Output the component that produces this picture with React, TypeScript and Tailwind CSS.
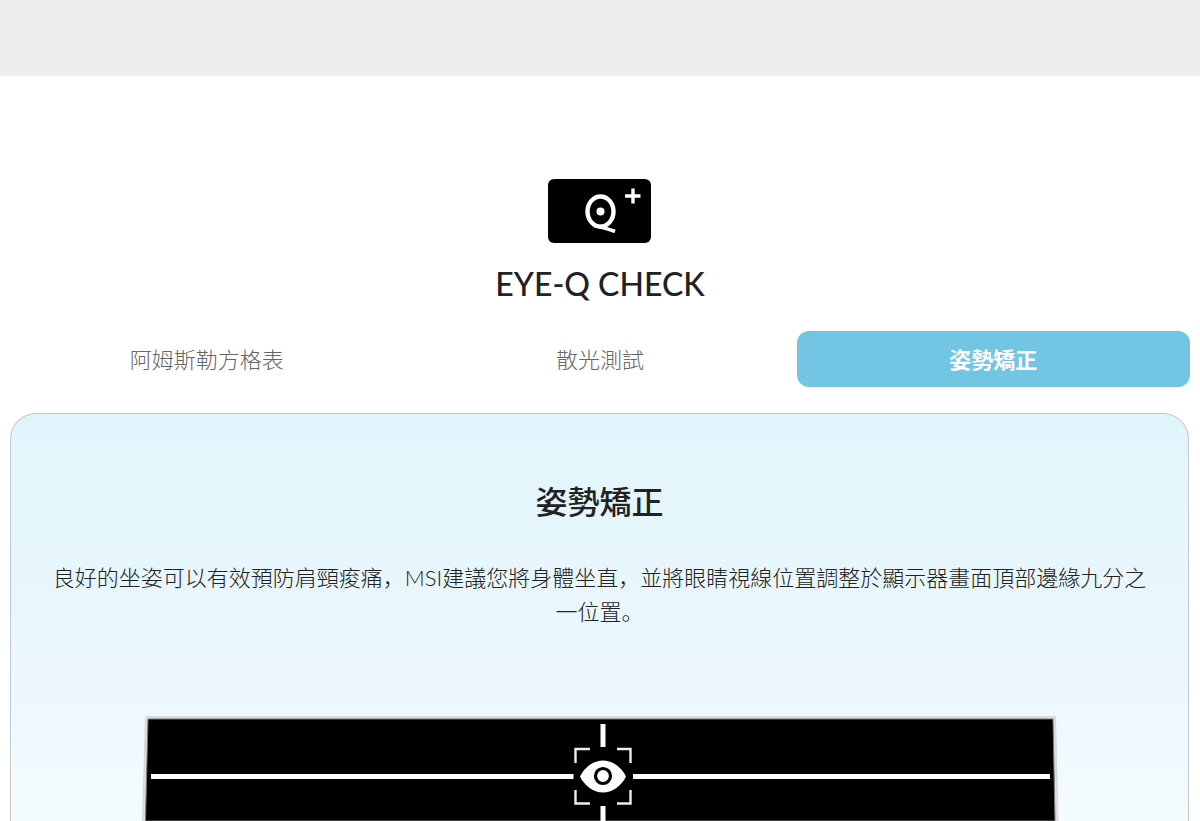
import { useState } from "react";
import clsx from "clsx";

const tabs = ["阿姆斯勒方格表", "散光測試", "姿勢矯正"];

function EyeQLogo() {
  return (
    <svg viewBox="0 0 104 64" className="h-16 w-[104px]" aria-hidden="true">
      <rect width="103" height="64" rx="6" fill="#000" />
      <ellipse cx="52.5" cy="32.5" rx="13" ry="15" fill="none" stroke="#fff" strokeWidth="4.4" />
      <path d="M46 46.500C52 48 60 49.500 67 52.500" fill="none" stroke="#fff" strokeWidth="3.6" />
      <circle cx="52.5" cy="32.5" r="4" fill="#fff" />
      <path d="M85 9.500V24.500M77 17H92.500" stroke="#fff" strokeWidth="3.4" />
    </svg>
  );
}

function MonitorGuide() {
  return (
    <svg viewBox="0 0 920 107" className="mx-auto block w-full max-w-[920px]" aria-hidden="true">
      <path d="M5.5 2.5H915.5L918 107H2.5Z" fill="#dfdddc" stroke="#d5d8da" />
      <path d="M8 5H913L915 107H5.5Z" fill="#000" stroke="#777" />
      <g stroke="#fff" strokeWidth="5">
        <path d="M11 62.500H433.5M493 62.500H910" />
        <path d="M463 10V33M463 92V107" />
      </g>
      <path
        d="M450 35H435.500V49M477 35H490.500V49M435.500 76V89.500H450M477 89.500H490.500V76"
        fill="none"
        stroke="#eee"
        strokeWidth="2.4"
      />
      <path
        d="M440 62.500C444 54 453 46.500 463 46.500S482 54 486 62.500C482 71 473 78.500 463 78.500S444 71 440 62.500Z"
        fill="#fff"
      />
      <circle cx="463" cy="62" r="7.5" fill="#fff" stroke="#000" strokeWidth="3.2" />
    </svg>
  );
}

export default function App() {
  const [active, setActive] = useState(2);

  return (
    <div className="bg-white font-['Lato','Noto_Sans_CJK_SC',sans-serif] text-[#222]">
      <header className="h-[76px] bg-[#eee]" />

      <main className="pt-[103px] pr-[10px] pl-[10px]">
        <div className="flex flex-col items-center">
          <EyeQLogo />
          <h1 className="mt-5 text-[32px] leading-[42px] font-medium">EYE-Q CHECK</h1>
        </div>

        <div role="tablist" className="mt-[26px] grid grid-cols-3">
          {tabs.map((label, i) => (
            <button
              key={label}
              type="button"
              role="tab"
              aria-selected={active === i}
              onClick={() => setActive(i)}
              className={clsx(
                "h-14 rounded-xl text-[22px]",
                active === i ? "bg-[#72c6e4] font-bold text-white" : "font-light text-[#666]"
              )}
            >
              {label}
            </button>
          ))}
        </div>

        <section className="mt-[26px] mr-px rounded-t-[26px] border border-b-0 border-[#c5c9cc] bg-linear-to-b from-[#e0f5fb] via-[#eef8fe] via-75% to-[#f5fcff] px-9 pt-16">
          <h2 className="text-center text-[32px] leading-[48px] font-medium">姿勢矯正</h2>
          <p className="mt-[35px] text-center text-[22px] leading-[34px] font-light">
            良好的坐姿可以有效預防肩頸痠痛，MSI建議您將身體坐直，並將眼睛視線位置調整於顯示器畫面頂部邊緣九分之一位置。
          </p>
          <div className="mt-[85px]">
            <MonitorGuide />
          </div>
        </section>
      </main>
    </div>
  );
}
